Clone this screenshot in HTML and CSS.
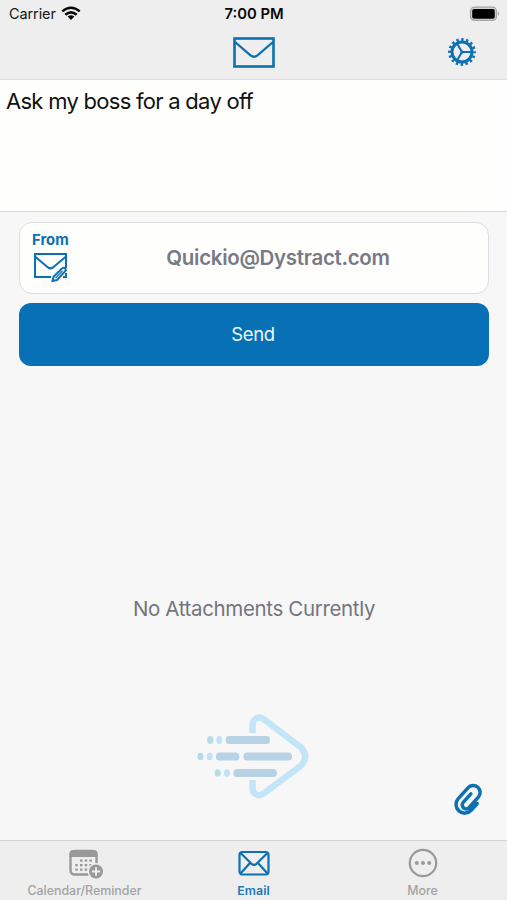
FILE: index.html
```html
<!DOCTYPE html>
<html lang="en">
<head>
<meta charset="utf-8">
<title>Quickio</title>
<link rel="stylesheet" href="styles.css">
</head>
<body>
<div class="app">
  <header class="header">
    <div class="status">
      <div class="carrier"><span class="carrier-name">Carrier</span>
        <svg class="wifi" width="20" height="15" viewBox="0 0 20 15" fill="none" stroke="#080808" stroke-width="2.5"><path d="M1.3 5.4Q10 -2 18.7 5.4M4.3 8.7Q10 4 15.7 8.7"/><path d="M6.6 10.6Q10 7.8 13.4 10.6L10 14Z" fill="#080808" stroke="none"/></svg>
      </div>
      <div class="time">7:00 PM</div>
      <svg class="battery" width="32" height="16" viewBox="0 0 32 16"><rect x="1.5" y="1.2" width="26" height="13.2" rx="4" fill="#d2d2d2" stroke="#a5a5a5" stroke-width="1.3"/><rect x="3.2" y="3" width="22.6" height="9.8" rx="2" fill="#000"/><path d="M29 5.5Q31.5 7.7 29 10Z" fill="#a5a5a5"/></svg>
    </div>
    <div class="nav">
      <svg class="nav-mail" width="42" height="31" viewBox="0 0 42 31" fill="none" stroke="#0d70b2" stroke-width="2.6"><rect x="1.5" y="1.5" width="39" height="28"/><path d="M2 5L17.5 18.3Q21 21.2 24.5 18.3L40 5" stroke-width="2.3"/></svg>
      <svg class="gear" width="30" height="30" viewBox="0 0 30 30" fill="none" stroke="#0d70b2"><circle cx="15" cy="15" r="12.5" stroke-width="2.8" stroke-dasharray="2.4 2.509" stroke-dashoffset="1.2"/><circle cx="15" cy="15" r="10" stroke-width="3"/><path d="M15 15H25M15 15L10 6.4M15 15L10 23.6" stroke-width="2"/><circle cx="15" cy="15" r="1.6" fill="#0d70b2" stroke="none"/></svg>
    </div>
  </header>
  <section class="message"><span class="message-text">Ask my boss for a day off</span></section>
  <main class="main">
    <div class="from-card">
      <div class="from">
        <span class="from-label">From</span>
        <svg class="from-icon" width="36" height="30" viewBox="0 0 36 30" fill="none" stroke="#0d70b2" stroke-width="2"><path d="M18 24H2V1H33V15M33 20V24H30"/><path d="M2 3.5L15 14.4Q17.5 16.3 20 14.4L33 3.5"/><path d="M19.5 28L20.5 23.8L29 15.5Q31 14.2 32.2 15.5Q33.4 17 32 18.4L24 27Z" fill="#fefefe"/><path d="M22.5 25L29.5 18" stroke-width="1.1"/></svg>
      </div>
      <span class="address">Quickio@Dystract.com</span>
    </div>
    <button class="send"><span class="send-text">Send</span></button>
    <p class="empty"><span class="empty-text">No Attachments Currently</span></p>
    <svg class="logo" width="130" height="100" viewBox="189 705 130 100" fill="none">
      <path d="M252.5 733V726C252.5 717.5 259.5 715.5 265 720L301 747.5Q309.5 756.5 301 765.5L265 792.5C259.5 797.5 252.5 795 252.5 787V780" stroke="#c3e5f8" stroke-width="6.4"/>
      <g fill="#b6d2e4"><rect x="225.7" y="736" width="44.3" height="8" rx="3.5"/><rect x="216" y="752.5" width="23.3" height="8" rx="3.5"/><rect x="243.5" y="752.5" width="48.5" height="8" rx="3.5"/><rect x="233.5" y="769" width="43.3" height="8" rx="3.5"/></g>
      <g fill="#b6dce8"><ellipse cx="210.3" cy="740" rx="3.2" ry="4"/><ellipse cx="200.5" cy="756.5" rx="3" ry="3.8"/><ellipse cx="217.7" cy="773" rx="3" ry="3.8"/></g>
      <g fill="#bfe2f4"><ellipse cx="219.3" cy="740" rx="3" ry="4"/><ellipse cx="209.7" cy="756.5" rx="3" ry="3.8"/><ellipse cx="227" cy="773" rx="3" ry="3.8"/></g>
    </svg>
    <svg class="clip" width="32" height="36" viewBox="0 0 32 36" fill="none" stroke="#0d70b2" stroke-width="3.5" stroke-linecap="round"><path transform="translate(15.2 17.5) rotate(42)" d="M9.4 -3V6A8.7 8.7 0 0 1 -8 6V-8.5A7 7 0 0 1 6 -8.500V5.500A3.900 3.900 0 0 1 -1.800 5.500V-6"/></svg>
  </main>
  <nav class="tabs">
    <div class="tab tab-calendar">
      <svg width="36" height="32" viewBox="0 0 36 32"><rect x="3.5" y="3" width="26" height="23.5" rx="4" fill="none" stroke="#999" stroke-width="2.4"/><path d="M2.5 9V5.5Q2.5 2 6 2H27Q30.5 2 30.5 5.5V9Z" fill="#999"/><path d="M13 12.7H26M8.3 17.2H26M8.3 21.7H21" stroke="#999" stroke-width="2.3" stroke-dasharray="2.5 2.2"/><circle cx="29" cy="23.5" r="8.4" fill="#eee"/><circle cx="29" cy="23.5" r="7" fill="#999"/><path d="M24.8 23.5H33.2M29 19.3V27.7" stroke="#eee" stroke-width="1.9"/></svg>
      <span class="tab-label">Calendar/Reminder</span>
    </div>
    <div class="tab tab-email">
      <svg width="36" height="32" viewBox="0 0 36 32" fill="none" stroke="#0d70b2" stroke-width="2.2"><rect x="3.5" y="4" width="29" height="22.5" rx="3"/><path d="M4.5 5L15.5 15.8Q18 18 20.5 15.8L31.5 5M4.5 25.5L14 15M31.5 25.5L22 15"/></svg>
      <span class="tab-label">Email</span>
    </div>
    <div class="tab tab-more">
      <svg width="36" height="32" viewBox="0 0 36 32"><circle cx="18" cy="15" r="13.2" fill="none" stroke="#999" stroke-width="2.2"/><g fill="#999"><circle cx="11.8" cy="15" r="2"/><circle cx="18" cy="15" r="2"/><circle cx="24.2" cy="15" r="2"/></g></svg>
      <span class="tab-label">More</span>
    </div>
  </nav>
</div>
</body>
</html>
```
FILE: styles.css
```css
* { box-sizing: border-box; }
body { margin: 0; font-family: Inter, "Liberation Sans", sans-serif; background: #f7f7f7; color: #161616; }
span { white-space: nowrap; }
.app { width: 507px; height: 900px; display: flex; flex-direction: column; overflow: hidden; }
.header { height: 80px; background: #eee; border-bottom: 1px solid #dcdcdc; }
.status { height: 28px; display: grid; grid-template-columns: 1fr auto 1fr; align-items: center; padding: 0 7px 0 9px; }
.carrier { display: flex; align-items: center; gap: 5px; font-size: 14.5px; letter-spacing: -0.1px; line-height: 28px; }
.wifi { margin-top: -2px; }
.time { font-size: 14.8px; font-weight: 600; line-height: 28px; color: #080808; margin-right: 1px; }
.battery { justify-self: end; margin: -1px -1px 0 0; }
.nav { display: grid; grid-template-columns: 1fr 42px 1fr; align-items: center; height: 48px; padding: 0 30px; }
.nav-mail { grid-column: 2; }
.gear { justify-self: end; }
.message { height: 132px; background: #fefefd; border-bottom: 1.5px solid #dadada; padding: 8px 6px; font-size: 22px; line-height: 27px; letter-spacing: -0.72px; color: #111; }
.main { flex: 1; display: flex; flex-direction: column; align-items: center; padding: 10px 18px 0 19px; }
.from-card { width: 470px; height: 72px; border: 1.5px solid #dedee0; border-radius: 13px; background: #fefefd; display: grid; grid-template-columns: 48px 1fr; padding: 0 11px; align-items: center; }
.from { align-self: start; display: flex; flex-direction: column; padding-top: 8px; }
.from-label { margin-left: 1px; color: #0d70b2; font-size: 14.8px; line-height: 19px; font-weight: 700; }
.from-icon { margin: 3px 0 0 2px; }
.address { text-align: center; color: #777a85; font-weight: 600; font-size: 20.5px; letter-spacing: -0.3px; padding-bottom: 1px; }
.send { width: 470px; height: 63px; margin: 9px 0 0; border: 0; border-radius: 12px; background: #0870b4; color: #edf8ff; font: 18.5px Inter, "Liberation Sans", sans-serif; letter-spacing: -0.4px; padding: 0 2px 1px 0; }
.empty { margin: 229px 0 0; font-size: 20.5px; line-height: 28px; letter-spacing: -0.35px; color: #73757f; }
.logo { margin-top: 82px; }
.clip { align-self: flex-end; margin: -23px 4px 0 0; }
.tabs { height: 60px; background: #eee; border-top: 1px solid #d4d4d4; display: grid; grid-template-columns: repeat(3, 1fr); }
.tab { display: flex; flex-direction: column; align-items: center; padding-top: 7px; color: #a3a3a3; font-size: 12.4px; font-weight: 500; line-height: 16px; }
.tab-label { margin-top: 3px; }
.tab-email { color: #2478b4; font-weight: 600; }
```
